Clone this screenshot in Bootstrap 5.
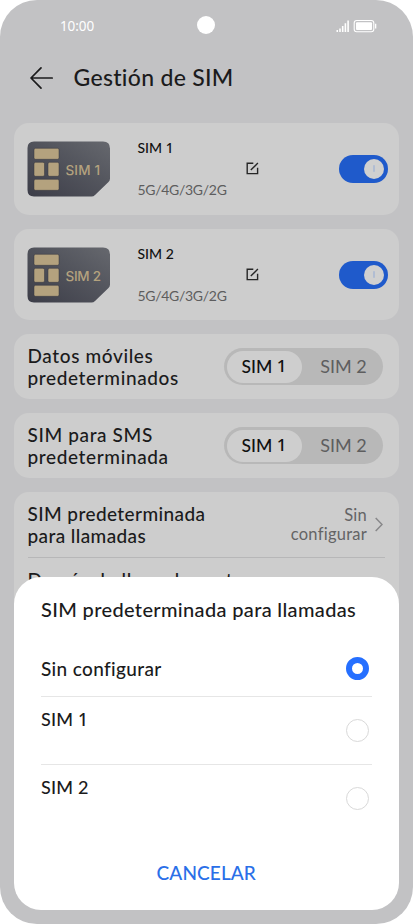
<!DOCTYPE html>
<html lang="es">
<head>
<meta charset="utf-8">
<meta name="viewport" content="width=device-width, initial-scale=1">
<title>Gestión de SIM</title>
<link href="https://cdn.jsdelivr.net/npm/bootstrap@5.3.0/dist/css/bootstrap.min.css" rel="stylesheet">
<style>
body{background:#fff;font-family:Lato,"Noto Sans",sans-serif;color:#1b1b1c;font-weight:500}
.phone{width:413px;height:924px;border-radius:37px;background:#c2c2c4}
.status{height:51px;color:#fff;padding:1px 36px 0 60px}
.clock,.digit{font-family:"Noto Sans",sans-serif}
.clock{font-size:13.5px;letter-spacing:-.1px;font-weight:400}
.digit{font-size:.97em;line-height:1}
.camera{width:18px;height:18px;background:#fff;left:197px;top:16px}
.topbar{height:72px;padding:0 30px 19px;gap:19.5px}
.topbar h1{font-size:23px;font-weight:500;letter-spacing:.3px}
.panel{background:#cdcdcd;border-radius:15px;margin:0 14px 14px}
.sim-panel{height:91.7px;padding:0 11px 0 13px}
.sim-info{width:108.5px;margin-left:26.5px}
.sim-name{font-size:14px;color:#111;line-height:18px;margin-bottom:24px}
.sim-net{font-size:14px;color:#5d5d5e;line-height:18px;font-weight:400;letter-spacing:-.3px}
.toggle{width:49px;height:28px;background:#1f5acb;padding:4px}
.knob{width:20px;height:20px;background:#d0d0d0}
.knob i{width:2px;height:7px;background:#b1bdd3;border-radius:1px}
.choice{height:65px;padding:0 16px 0 13.5px;margin-bottom:14px}
.row-label{font-size:19px;line-height:22px;letter-spacing:.62px}
.seg{width:159px;height:37px;background:#b8b8b8;padding:2.5px;font-size:17.5px}
.seg span.part{width:75px;height:32px;white-space:pre}
.seg .on{background:#cecece;color:#111}
.seg .part.off{color:#5e5e5f;width:79px;padding-left:5px;font-weight:400;font-size:18px}
.calls{height:120px;margin-bottom:0;padding:0 14px 0 13.5px}
.call-row{height:65.5px;border-bottom:1px solid #b7b7b8;padding-right:2px}
.call-row .row-label{letter-spacing:.4px}
.next-label{padding-top:11px;letter-spacing:.6px}
.call-value{font-size:16.5px;line-height:19px;color:#646465;font-weight:400;letter-spacing:.25px}
.sheet{left:14px;top:577px;width:385px;height:333px;border-radius:27px;padding:0 27.5px 0 27px}
.sheet h2{font-size:20px;height:65px;padding-bottom:2px;font-weight:500;letter-spacing:.34px}
.opt{border-bottom:1px solid #e6e6e6;font-size:18px;padding-right:2.5px}
.opt.a{height:55px;font-size:19px;letter-spacing:.35px}.opt.b{height:68px}.opt.c{height:68px;border:0}
.opt .lbl{line-height:24px;white-space:pre}
.a .lbl,.ring.sel{margin-top:-1px}
.b .lbl,.c .lbl{margin-top:-24px;letter-spacing:.2px}
.c .ring{margin-top:-2px}
.ring{width:23px;height:23px;border:1.5px solid #d9d9d9;border-radius:50%}
.ring.sel{border:6px solid #256fff}
.cancel{font-size:19px;color:#2a6fe8;height:48px;letter-spacing:.1px}
</style>
</head>
<body>
<main class="phone position-relative overflow-hidden">
<div class="status d-flex justify-content-between align-items-center"><span class="clock">10:00</span>
<svg width="42" height="14" viewBox="0 0 42 14"><g fill="#fff"><path d="M1.500 11h1.500v2H1.500zM4.200 9.400h1.600V13H4.200zM6.900 7h1.600v6H6.900zM9.600 4.300h1.600V13H9.600zM12.300 1.500h1.600V13h-1.600z"/><rect x="21" y="3.300" width="16" height="7.800" rx="1"/><path d="M40 4.800h1.300v4.800H40z"/></g><rect x="19.200" y="1.500" width="19.600" height="11.300" rx="2.500" fill="none" stroke="#fff" stroke-width="1.100"/></svg></div>
<span class="camera position-absolute rounded-circle"></span>
<header class="topbar d-flex align-items-center">
<svg width="24" height="24" viewBox="0 0 24 24" fill="none" stroke="#1b1b1c" stroke-width="1.700" stroke-linecap="round" stroke-linejoin="round"><path d="M22.200 12H1.200M11 1.900 1 12l10 10.100"/></svg>
<h1 class="m-0">Gestión de SIM</h1></header>

<section class="panel sim-panel d-flex align-items-center">
<svg class="chip flex-shrink-0" width="84" height="56" viewBox="0 0 84 56"><defs><linearGradient id="metal" x1="0" y1="1" x2="1" y2="0"><stop stop-color="#3c3d48"/><stop offset=".6" stop-color="#54565e"/><stop offset="1" stop-color="#66686e"/></linearGradient></defs><path fill="url(#metal)" d="M7 .5h69q7 0 7 7v30q0 2-1.500 3.500L68 54q-1.500 1.500-3.500 1.500H7q-6.500 0-6.500-6.500V7Q.5.5 7 .5z"/><g fill="#b4a27e" stroke="#34343d" stroke-width=".5"><rect x="7" y="7.300" width="25" height="11" rx="1.500"/><rect x="7" y="21.300" width="10.500" height="14" rx="1.500"/><rect x="21" y="21.300" width="11" height="14" rx="1.500"/><rect x="7" y="38.300" width="25" height="11" rx="1.500"/></g><text x="38.500" y="33.500" fill="#b4a27e" font-size="13.500" font-family="Inter, sans-serif" font-weight="500" textLength="34.500">SIM 1</text></svg>
<div class="sim-info flex-grow-0"><div class="sim-name">SIM <span class="digit">1</span></div><div class="sim-net">5G/4G/3G/2G</div></div>
<svg class="edit" width="13" height="13" viewBox="0 0 13 13" fill="none" stroke="#262626" stroke-width="1.400"><path d="M7.300 1.200H1.200v10.400h10.400V5.700M4.800 8.100 11.900 1"/></svg>
<div class="toggle rounded-pill ms-auto d-flex justify-content-end align-items-center"><span class="knob rounded-circle d-flex align-items-center justify-content-center"><i></i></span></div>
</section>
<section class="panel sim-panel d-flex align-items-center">
<svg class="chip flex-shrink-0" width="84" height="56" viewBox="0 0 84 56"><path fill="url(#metal)" d="M7 .5h69q7 0 7 7v30q0 2-1.500 3.500L68 54q-1.500 1.500-3.500 1.500H7q-6.500 0-6.500-6.500V7Q.5.5 7 .5z"/><g fill="#b4a27e" stroke="#34343d" stroke-width=".5"><rect x="7" y="7.300" width="25" height="11" rx="1.500"/><rect x="7" y="21.300" width="10.500" height="14" rx="1.500"/><rect x="21" y="21.300" width="11" height="14" rx="1.500"/><rect x="7" y="38.300" width="25" height="11" rx="1.500"/></g><text x="38.500" y="33.500" fill="#b4a27e" font-size="13.500" font-family="Inter, sans-serif" font-weight="500" textLength="35.500">SIM 2</text></svg>
<div class="sim-info flex-grow-0"><div class="sim-name">SIM 2</div><div class="sim-net">5G/4G/3G/2G</div></div>
<svg class="edit" width="13" height="13" viewBox="0 0 13 13" fill="none" stroke="#262626" stroke-width="1.400"><path d="M7.300 1.200H1.200v10.400h10.400V5.700M4.800 8.100 11.900 1"/></svg>
<div class="toggle rounded-pill ms-auto d-flex justify-content-end align-items-center"><span class="knob rounded-circle d-flex align-items-center justify-content-center"><i></i></span></div>
</section>
<section class="panel choice d-flex align-items-center justify-content-between"><div class="row-label">Datos móviles<br>predeterminados</div>
<div class="seg rounded-pill d-flex"><span class="part on rounded-pill d-flex align-items-center justify-content-center">SIM <span class="digit">1</span></span><span class="part off d-flex align-items-center justify-content-center">SIM 2</span></div></section>
<section class="panel choice d-flex align-items-center justify-content-between"><div class="row-label">SIM para SMS<br>predeterminada</div>
<div class="seg rounded-pill d-flex"><span class="part on rounded-pill d-flex align-items-center justify-content-center">SIM <span class="digit">1</span></span><span class="part off d-flex align-items-center justify-content-center">SIM 2</span></div></section>
<section class="panel calls"><div class="call-row d-flex align-items-center justify-content-between"><div class="row-label">SIM predeterminada<br>para llamadas</div>
<div class="d-flex align-items-center gap-2"><div class="call-value text-end">Sin<br>configurar</div><svg width="8" height="15" viewBox="0 0 8 15" fill="none" stroke="#88888a" stroke-width="1.500"><path d="m.7 1 6.300 6.500L.7 14"/></svg></div></div>
<div class="row-label next-label">Desvío de llamadas entre</div></section>

<section class="sheet position-absolute bg-white">
<h2 class="m-0 d-flex align-items-center">SIM predeterminada para llamadas</h2>
<div class="opt a d-flex align-items-center justify-content-between"><span class="lbl">Sin configurar</span><span class="ring sel"></span></div>
<div class="opt b d-flex align-items-center justify-content-between"><span class="lbl">SIM <span class="digit">1</span></span><span class="ring"></span></div>
<div class="opt c d-flex align-items-center justify-content-between"><span class="lbl">SIM 2</span><span class="ring"></span></div>
<div class="cancel d-flex align-items-center justify-content-center mt-3">CANCELAR</div>
</section>
</main>
<script src="https://cdn.jsdelivr.net/npm/bootstrap@5.3.0/dist/js/bootstrap.bundle.min.js"></script>
</body>
</html>
